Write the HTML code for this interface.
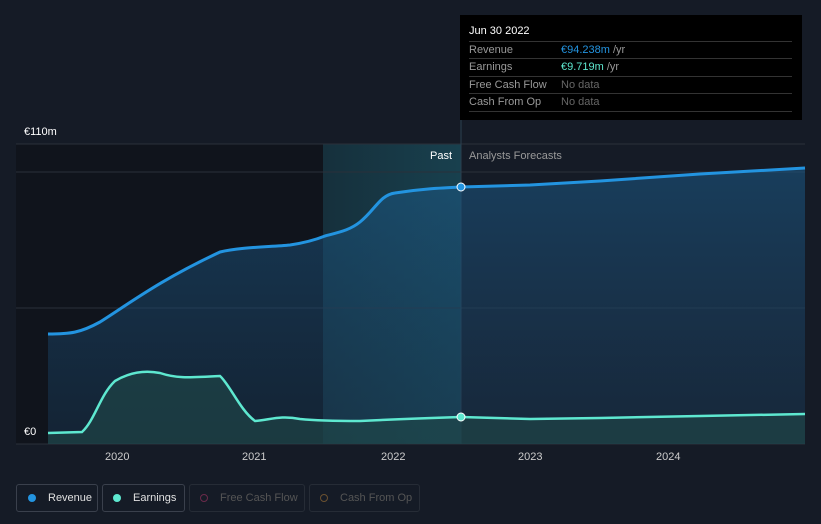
<!DOCTYPE html>
<html><head><style>
body{margin:0;width:821px;height:524px;background:#151b26;font-family:"Liberation Sans",sans-serif;overflow:hidden;position:relative}
.t{position:absolute;font-size:11px;color:#fff}
.leg{position:absolute;top:484px;height:28px;border:1px solid #3a404c;border-radius:3px;box-sizing:border-box;font-size:11px;color:#e0e0e0;display:flex;align-items:center;padding-left:10px}
.leg i{display:inline-block;width:8px;height:8px;border-radius:50%;margin-right:12px}
.tt{position:absolute;left:460px;top:15px;width:342px;height:105px;background:#000}
.row{position:absolute;left:9px;width:323px;font-size:11px;color:#999;border-top:1px solid #333;height:17px;line-height:17px}
.row span{position:absolute;left:92px}
</style></head><body>
<svg width="821" height="524" style="position:absolute;left:0;top:0">
<defs>
<linearGradient id="hl" x1="0" x2="1"><stop offset="0" stop-color="#16303c"/><stop offset="1" stop-color="#18404e"/></linearGradient>
<linearGradient id="rv" x1="0" y1="0" x2="0" y2="1"><stop offset="0" stop-color="#1b5a88" stop-opacity=".55"/><stop offset="1" stop-color="#1a3a58" stop-opacity=".4"/></linearGradient>
</defs>
<rect x="16" y="144" width="307" height="300" fill="#10141c"/>
<rect x="323" y="144" width="138" height="300" fill="url(#hl)"/>
<line x1="16" y1="144" x2="805" y2="144" stroke="#2a303a"/>
<line x1="16" y1="172" x2="805" y2="172" stroke="#2a303a"/>
<line x1="16" y1="308" x2="805" y2="308" stroke="#2a303a"/>
<line x1="16" y1="444" x2="805" y2="444" stroke="#2a303a"/>
<line x1="461" y1="15" x2="461" y2="444" stroke="#2a4050"/>
<path d="M48,334 C70,334 80,333 100,322 C130,303 160,280 220,252 C240,247 270,247 290,245 C310,242 320,238 325,236 C340,232 350,230 360,222 C375,210 380,195 395,193 C420,189 440,188 461,187 L530,185 L600,181 L700,174 L805,168 L805,444 L48,444 Z" fill="url(#rv)"/>
<path d="M48,433 L82,432 C95,420 100,395 115,381 C130,372 145,370 160,373 C175,378 185,378 220,376 C230,385 240,410 255,421 C270,420 280,415 300,419 C320,421 340,421 360,421 C380,420 400,419 461,417 L530,419 L600,418 L700,416 L805,414 L805,444 L48,444 Z" fill="#1f4a4a" fill-opacity=".6"/>
<path d="M48,334 C70,334 80,333 100,322 C130,303 160,280 220,252 C240,247 270,247 290,245 C310,242 320,238 325,236 C340,232 350,230 360,222 C375,210 380,195 395,193 C420,189 440,188 461,187 L530,185 L600,181 L700,174 L805,168" fill="none" stroke="#2394e0" stroke-width="3"/>
<path d="M48,433 L82,432 C95,420 100,395 115,381 C130,372 145,370 160,373 C175,378 185,378 220,376 C230,385 240,410 255,421 C270,420 280,415 300,419 C320,421 340,421 360,421 C380,420 400,419 461,417 L530,419 L600,418 L700,416 L805,414" fill="none" stroke="#5ee8d0" stroke-width="2.5"/>
<circle cx="461" cy="187" r="4" fill="#2394e0" stroke="#fff" stroke-width="1"/>
<circle cx="461" cy="417" r="4" fill="#5ee8d0" stroke="#fff" stroke-width="1"/>
</svg>
<div class="t" style="left:24px;top:126px">€110m</div>
<div class="t" style="left:24px;top:426px">€0</div>
<div class="t" style="left:430px;top:150px">Past</div>
<div class="t" style="left:469px;top:150px;color:#999">Analysts Forecasts</div>
<div class="t" style="left:105px;top:451px;color:#ccc">2020</div>
<div class="t" style="left:242px;top:451px;color:#ccc">2021</div>
<div class="t" style="left:381px;top:451px;color:#ccc">2022</div>
<div class="t" style="left:518px;top:451px;color:#ccc">2023</div>
<div class="t" style="left:656px;top:451px;color:#ccc">2024</div>
<div class="tt">
<div class="t" style="left:9px;top:10px">Jun 30 2022</div>
<div class="row" style="top:26px">Revenue<span><b style="font-weight:normal;color:#2394e0">€94.238m</b> /yr</span></div>
<div class="row" style="top:43px">Earnings<span><b style="font-weight:normal;color:#5ee8d0">€9.719m</b> /yr</span></div>
<div class="row" style="top:61px">Free Cash Flow<span style="color:#666">No data</span></div>
<div class="row" style="top:78px">Cash From Op<span style="color:#666">No data</span></div>
<div class="row" style="top:96px;height:0"></div>
</div>
<div class="leg" style="left:16px;width:82px;padding-left:11px"><i style="background:#2394e0"></i>Revenue</div>
<div class="leg" style="left:102px;width:83px"><i style="background:#5ee8d0"></i>Earnings</div>
<div class="leg" style="left:189px;width:116px;border-color:#262c36;color:#555"><i style="border:1px solid #6a2a4a;box-sizing:border-box"></i>Free Cash Flow</div>
<div class="leg" style="left:309px;width:111px;border-color:#262c36;color:#555"><i style="border:1px solid #6a5030;box-sizing:border-box"></i>Cash From Op</div>
</body></html>
